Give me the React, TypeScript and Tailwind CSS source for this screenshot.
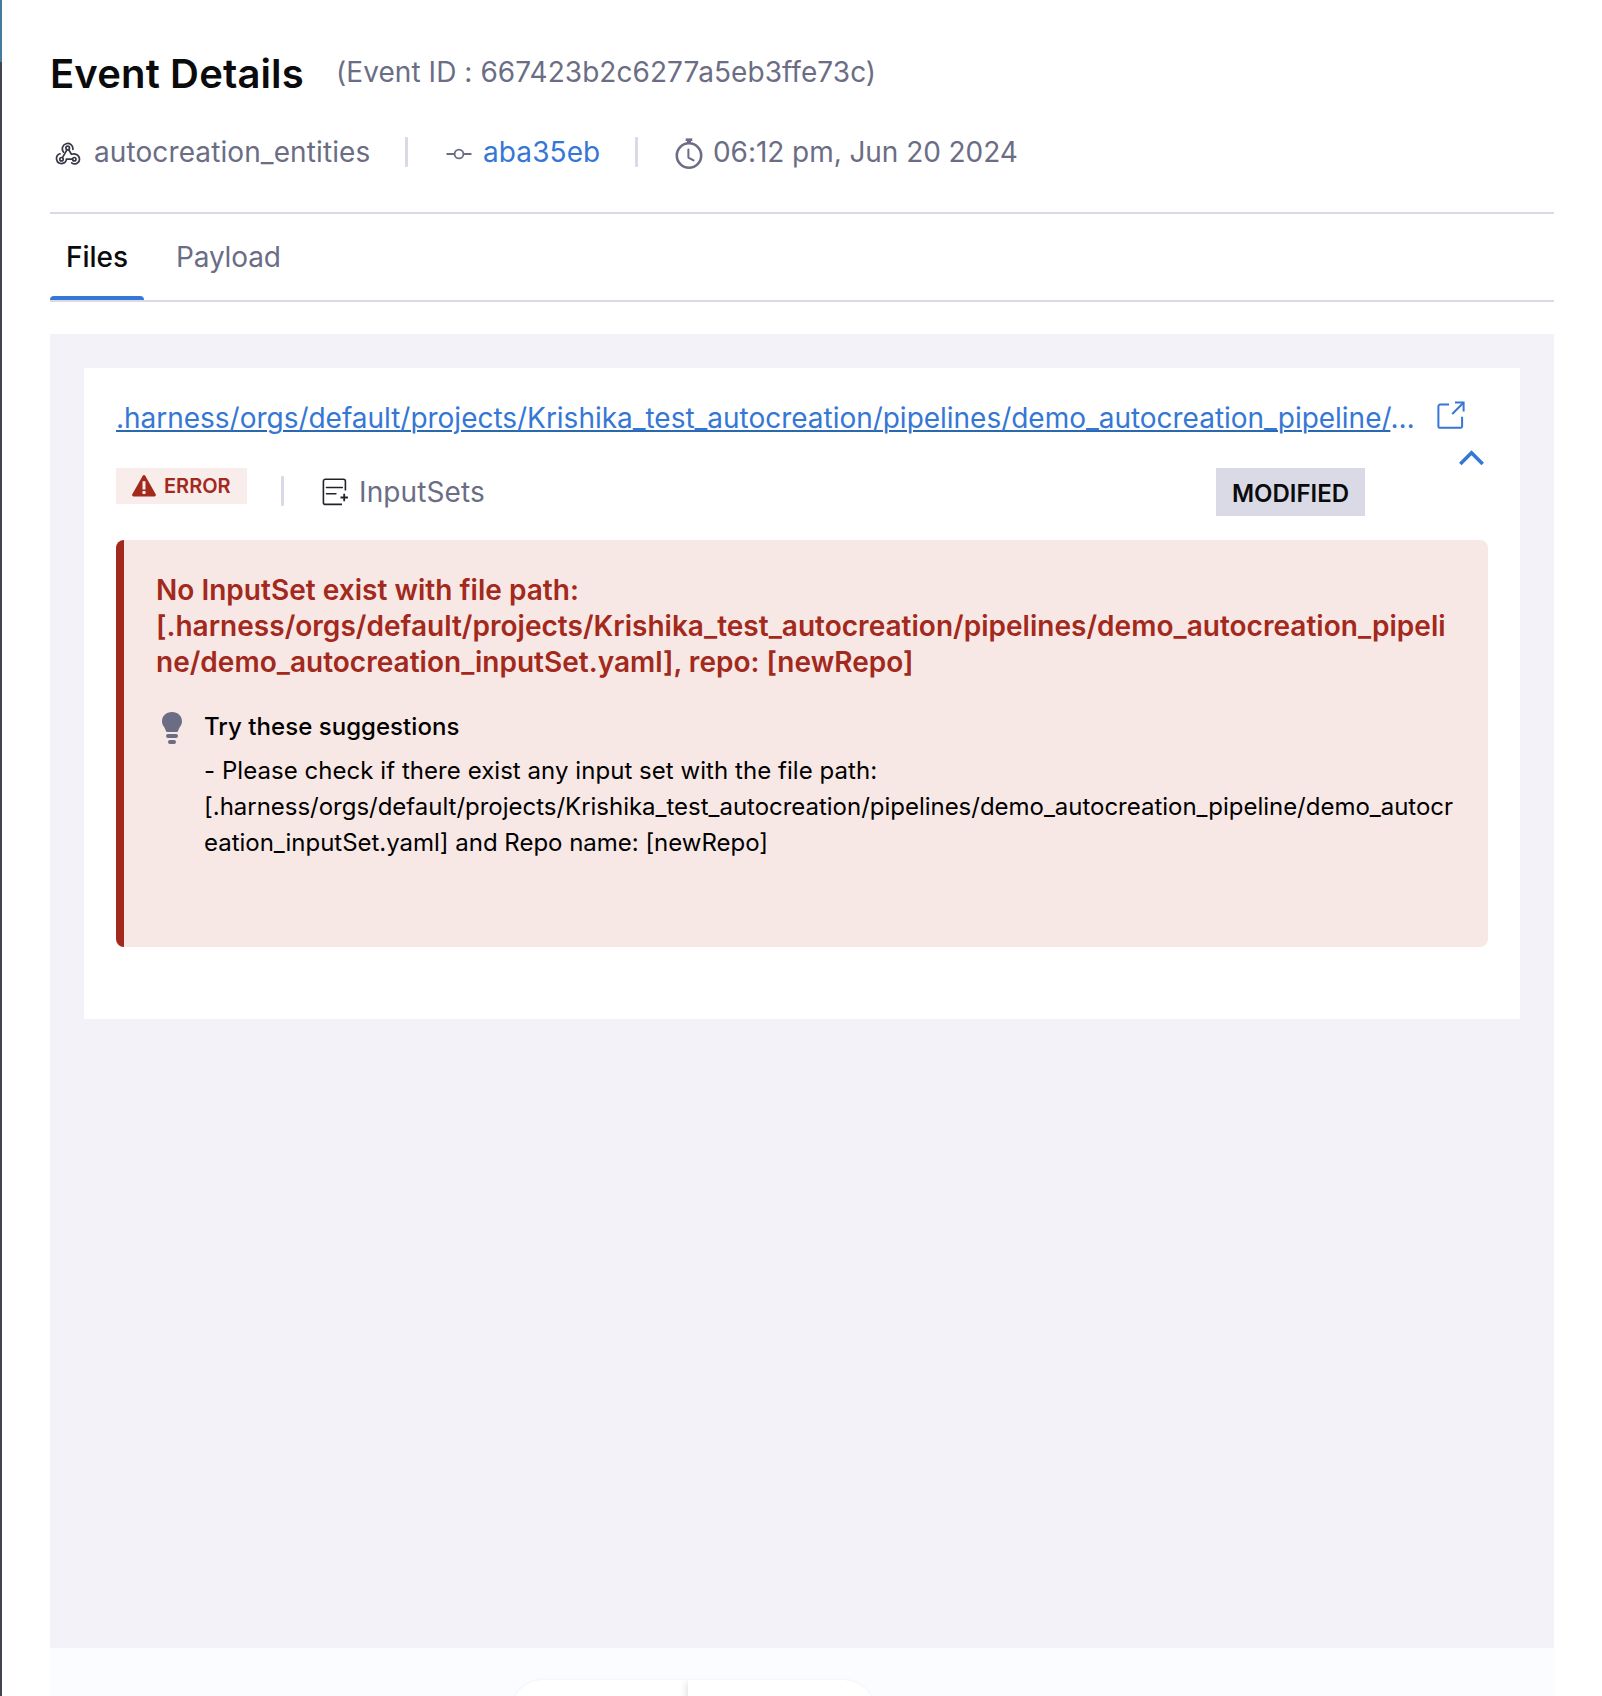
import React from "react";

const WebhookIcon = () => (
  <svg className="mt-[8px] ml-[5px] h-[24px] w-[26px]" viewBox="0 0 26 24" fill="none" stroke="#383946" strokeWidth="1.7" strokeLinecap="round">
    <path d="M8.600 10.200A5.300 5.300 0 1 1 17.900 7.400" />
    <circle cx="12.700" cy="6" r="1.800" />
    <path d="M11.900 7.800 7.600 15.400M13.700 7.700l2.700 4.600c3.900-1.500 8.100.9 8.100 4.900a4.800 4.800 0 0 1-7.800 3.600" />
    <path d="M5 11.800a5 5 0 1 0 6.500 5.400h6" />
    <circle cx="6.500" cy="17.200" r="1.700" />
    <circle cx="19.300" cy="17.200" r="1.700" />
  </svg>
);

const CommitIcon = () => (
  <svg className="mt-[14px] h-[12px] w-[26px]" viewBox="0 0 26 12" fill="none" stroke="#6b6d85" strokeWidth="1.8">
    <circle cx="13" cy="6" r="4.4" />
    <path d="M.5 6h8M17.5 6h8" />
  </svg>
);

const StopwatchIcon = () => (
  <svg className="mt-[4px] h-[32px] w-[28px]" viewBox="0 0 28 32" fill="none" stroke="#6b6d85">
    <circle cx="14" cy="17.5" r="12.2" strokeWidth="2.6" />
    <path d="M10.7 1.7h6.6" strokeWidth="2.6" />
    <path d="M14 3v3" strokeWidth="4" />
    <path d="M13.4 11.6v8l5.2 2.8" strokeWidth="2" strokeLinecap="round" strokeLinejoin="round" />
  </svg>
);

const ExternalIcon = () => (
  <svg className="mt-[1px] h-[28px] w-[28px]" viewBox="0 0 28 28" fill="none" stroke="#3577d4" strokeWidth="2">
    <path d="M12 3.6H3.2a1.8 1.8 0 0 0-1.8 1.8v20.2a1.2 1.2 0 0 0 1.2 1.2h21a1.5 1.5 0 0 0 1.5-1.5V15.8" />
    <path d="M18 1.6h8.6v9" />
    <path d="M26.2 2 15.2 13" />
  </svg>
);

const InputSetIcon = () => (
  <svg className="mt-[4px] h-[28px] w-[27px]" viewBox="0 0 27 28" fill="none" stroke="#22222a" strokeWidth="1.6">
    <path d="M23.4 12.6V3.2a2 2 0 0 0-2-2H3.4a2 2 0 0 0-2 2v21.2a2 2 0 0 0 2 2H20" />
    <path d="M4.5 9.5h15.8M4.5 15.7h9.4" strokeLinecap="round" />
    <path d="M22.2 15.8v7.4M18.500 19.5h7.4" strokeWidth="1.8" />
  </svg>
);

const AlertIcon = () => (
  <svg className="mt-[7px] h-[22px] w-[24px]" viewBox="0 0 24 22">
    <path d="M10.6.9a1.6 1.6 0 0 1 2.8 0l10.3 18.4a1.5 1.5 0 0 1-1.3 2.2H1.6A1.5 1.5 0 0 1 .3 19.300z" fill="#a3291d" />
    <path d="M10.500 6.200h3v8.300h-3zM10.500 16h3v3h-3z" fill="#f9edeb" />
  </svg>
);

const BulbIcon = () => (
  <svg className="mt-[3px] ml-[6px] h-[32px] w-[20px]" viewBox="0 0 20 32" fill="#6b6d85">
    <path d="M10 0C4.200 0 0 4 0 9.300c0 3.200 1.600 4.900 2.700 6.700.5.900.8 1.600 1 2.600.2.900.6 1.400 1.300 1.400h10c.7 0 1.100-.5 1.300-1.400.2-1 .5-1.700 1-2.600 1.100-1.800 2.700-3.500 2.700-6.700C20 4 15.800 0 10 0z" />
    <rect x="4" y="22" width="12" height="4" rx="2" />
    <rect x="6" y="28" width="8" height="4" rx="2" />
  </svg>
);

const Divider = ({ className }: { className: string }) => (
  <div className={"h-[30px] w-[3px] rounded-[1px] bg-[#d9dae6] " + className} />
);

const Header = () => (
  <header className="border-b-2 border-[#d9dae6] pt-[50px]">
    <div className="flex h-[84px] items-start whitespace-nowrap">
      <h1 className="w-[286px] text-[40px] leading-[48px] font-semibold tracking-[0.14px] text-[#0b0b0d]">Event Details</h1>
      <p className="mt-[4px] text-[28px] leading-[36px] tracking-[0.06px]">(Event ID : 667423b2c6277a5eb3ffe73c)</p>
    </div>
    <div className="flex h-[78px] items-start text-[28px] leading-[36px] whitespace-nowrap">
      <WebhookIcon />
      <span className="ml-[13px] w-[276px] tracking-[0.1px]">autocreation_entities</span>
      <Divider className="mt-[3px] ml-[35px]" />
      <div className="ml-[38px] flex">
        <CommitIcon />
        <a className="ml-[11px] w-[117px] tracking-[0.1px] text-[#3577d4]">aba35eb</a>
      </div>
      <Divider className="mt-[3px] ml-[35px]" />
      <div className="ml-[37px] flex">
        <StopwatchIcon />
        <span className="ml-[10px] tracking-[-0.06px]">06:12 pm, Jun 20 2024</span>
      </div>
    </div>
  </header>
);

const Tabs = () => (
  <nav className="flex h-[88px] border-b-2 border-[#d9dae6] text-[28px] leading-[36px]">
    <div className="flex w-[94px] flex-col justify-between">
      <span className="pt-[25px] pl-[16px] font-medium text-[#0b0b0d]">Files</span>
      <span className="h-1 rounded-t-[4px] bg-[#3577d4]" />
    </div>
    <span className="ml-[32px] pt-[25px] tracking-[-0.15px]">Payload</span>
  </nav>
);

const ErrorBox = () => (
  <div className="mt-[24px] h-[407px] overflow-hidden rounded-[8px] bg-[#f7e8e5]">
    <div className="h-full border-l-8 border-[#a3291d] pt-[32px] pl-[32px] whitespace-nowrap">
      <p className="text-[28px] leading-[36px] font-semibold tracking-[0.022px] text-[#a3291d]">
        No InputSet exist with file path:
        <br />
        [.harness/orgs/default/projects/Krishika_test_autocreation/pipelines/demo_autocreation_pipeli
        <br />
        ne/demo_autocreation_inputSet.yaml], repo: [newRepo]
      </p>
      <div className="mt-[29px] flex items-start text-[24px] leading-[36px] text-black">
        <BulbIcon />
        <div className="ml-[22px]">
          <p className="font-medium tracking-[0.04px]">Try these suggestions</p>
          <p className="mt-[8px] tracking-[-0.02px]">
            <span className="tracking-[0.05px]">- Please check if there exist any input set with the file path:</span>
            <br />
            [.harness/orgs/default/projects/Krishika_test_autocreation/pipelines/demo_autocreation_pipeline/demo_autocr
            <br />
            eation_inputSet.yaml] and Repo name: [newRepo]
          </p>
        </div>
      </div>
    </div>
  </div>
);

const FileCard = () => (
  <section className="h-[651px] bg-white px-[32px] pt-[32px]">
    <div className="flex h-[116px]">
      <div className="flex-1">
        <div className="h-[68px] text-[28px] leading-[36px] tracking-[-0.02px] whitespace-nowrap text-[#3577d4]">
          <a className="underline decoration-[#2a68b0] decoration-2 underline-offset-[2px]">
            .harness/orgs/default/projects/Krishika_test_autocreation/pipelines/demo_autocreation_pipeline/
          </a>
          …
        </div>
        <div className="flex items-start">
          <div className="flex h-[36px] w-[131px] bg-[#f9edeb] pl-[16px] text-[20px] leading-[36px] font-semibold text-[#a3291d]">
            <AlertIcon />
            <span className="ml-[8px]">ERROR</span>
          </div>
          <Divider className="mt-[8px] ml-[34px]" />
          <div className="mt-[6px] ml-[38px] flex text-[28px] leading-[36px]">
            <InputSetIcon />
            <span className="ml-[10px] tracking-[0.12px]">InputSets</span>
          </div>
          <div className="mr-[72px] ml-auto flex h-[48px] w-[149px] justify-center bg-[#d9dae6] text-[24px] leading-[51px] font-semibold text-[#0b0b0d]">
            MODIFIED
          </div>
        </div>
      </div>
      <div className="flex w-[51px] flex-col">
        <ExternalIcon />
        <svg className="mt-[21px] ml-[22px] h-[16px] w-[25px]" viewBox="0 0 25 16" fill="none" stroke="#3577d4" strokeWidth="3.6">
          <path d="M1.300 14 12.500 2.800 23.700 14" />
        </svg>
      </div>
    </div>
    <ErrorBox />
  </section>
);

const Footer = () => (
  <footer className="flex h-[48px] justify-center overflow-hidden bg-[#fafcff] pt-[32px] pr-[218px]">
    <div className="flex h-[64px] w-[364px] shrink-0 overflow-hidden rounded-[32px] bg-white shadow-[0_0_3px_rgba(40,41,61,0.08)]">
      <div className="w-[177px]" />
      <div className="flex-1 bg-white shadow-[0_2px_8px_rgba(40,41,61,0.2)]" />
    </div>
  </footer>
);

export default function App() {
  return (
    <div className="flex h-[1696px] w-[1602px] overflow-hidden bg-white font-['Inter',sans-serif] text-[#6b6d85]">
      <div className="flex w-[2px] flex-col">
        <div className="h-[62px] bg-[#457b9d]" />
        <div className="flex-1 bg-[#41464d]" />
      </div>
      <main className="ml-[48px] w-[1504px]">
        <Header />
        <Tabs />
        <div className="mt-[32px] h-[1314px] bg-[#f3f2f9] px-[34px] pt-[34px]">
          <FileCard />
        </div>
        <Footer />
      </main>
    </div>
  );
}
